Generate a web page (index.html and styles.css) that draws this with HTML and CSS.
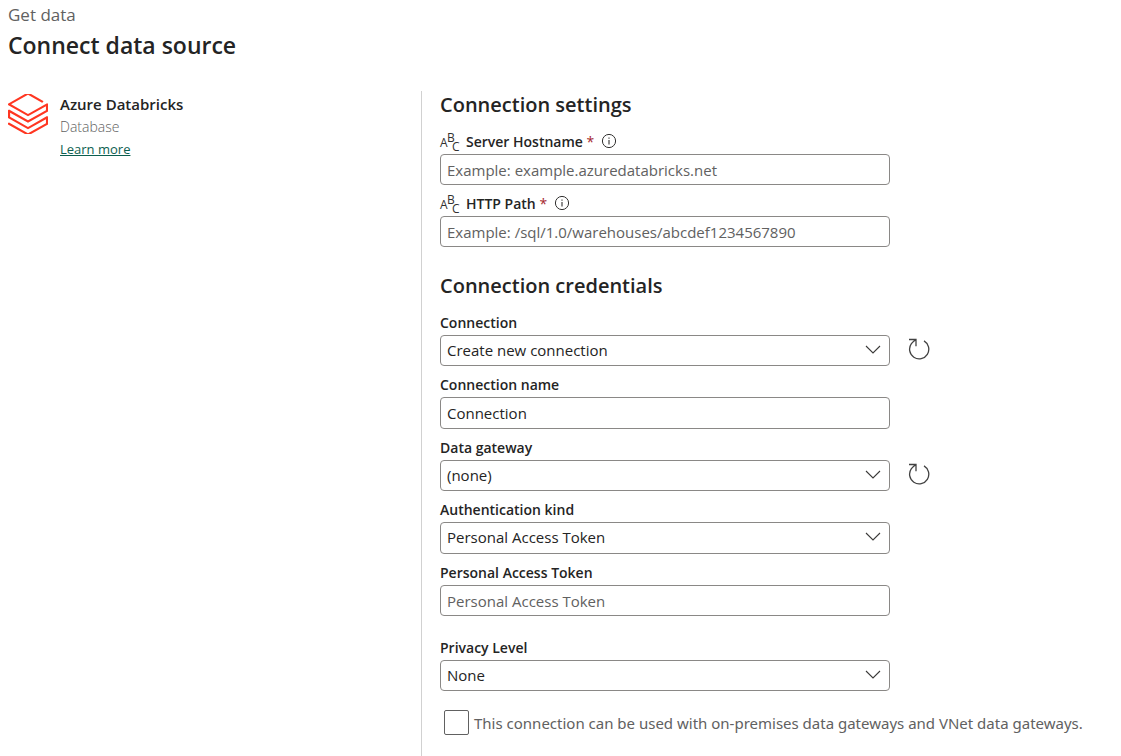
FILE: index.html
```html
<!DOCTYPE html>
<html lang="en">
<head>
<meta charset="utf-8">
<meta name="viewport" content="width=device-width, initial-scale=1">
<title>Connect data source</title>
<link rel="stylesheet" href="styles.css">
</head>
<body>
<svg class="sprite" aria-hidden="true">
  <symbol id="info" viewBox="0 0 16 16">
    <circle cx="8" cy="8" r="6.6" fill="none" stroke="#323130"/>
    <path d="M8 7v4.5M8 4.6v1.2" fill="none" stroke="#323130" stroke-width="1.1"/>
  </symbol>
  <symbol id="refresh" viewBox="0 0 22 22">
    <path d="M16 2.9A9.6 9.6 0 1 1 3.4 5.6Q4.800 3.900 7.600 1.800M1 1.500H8V8.200" fill="none" stroke="#424242" stroke-width="1.3"/>
  </symbol>
  <symbol id="chevron" viewBox="0 0 16 10">
    <path d="M1 1l7 7 7-7" fill="none" stroke="#3b3a39" stroke-width="1.1"/>
  </symbol>
</svg>

<header class="page-header">
  <p class="eyebrow">Get data</p>
  <h1 class="title">Connect data source</h1>
</header>

<main class="layout">
  <aside class="source">
    <svg class="source-logo" viewBox="0.95 0.95 22.1 22.1" role="img" aria-label="Azure Databricks">
      <path fill="#ff3621" d="M.95 14.184L12 20.403l9.919-5.55v2.21L12 22.662l-10.484-5.96-.565.308v.77L12 24l11.05-6.218v-4.317l-.515-.309L12 19.118l-9.867-5.653v-2.21L12 16.805l11.05-6.218V6.32l-.515-.308L12 11.974 2.647 6.681 12 1.388l7.76 4.368.668-.411v-.566L12 0 .95 6.27v.72L12 13.207l9.919-5.55v2.26L12 15.52 1.516 9.56l-.565.308Z"/>
    </svg>
    <div class="source-text">
      <h2 class="source-name">Azure Databricks</h2>
      <p class="source-kind">Database</p>
      <a class="source-link" href="#">Learn more</a>
    </div>
  </aside>

  <form class="form">
    <section class="group">
      <h2 class="group-title">Connection settings</h2>
      <div class="field">
        <div class="label-row">
          <svg class="icon-abc" viewBox="0 0 20 20" aria-hidden="true">
            <text class="glyph" x="0" y="15">A</text>
            <text class="glyph" x="7" y="10">B</text>
            <text class="glyph" x="12" y="19">C</text>
          </svg>
          <label class="label" for="host">Server Hostname <span class="required">*</span></label>
          <button class="icon-button" type="button" aria-label="About Server Hostname"><svg class="icon-info"><use href="#info"/></svg></button>
        </div>
        <input class="control" id="host" type="text" placeholder="Example: example.azuredatabricks.net">
      </div>
      <div class="field">
        <div class="label-row">
          <svg class="icon-abc" viewBox="0 0 20 20" aria-hidden="true">
            <text class="glyph" x="0" y="15">A</text>
            <text class="glyph" x="7" y="10">B</text>
            <text class="glyph" x="12" y="19">C</text>
          </svg>
          <label class="label" for="path">HTTP Path <span class="required">*</span></label>
          <button class="icon-button" type="button" aria-label="About HTTP Path"><svg class="icon-info"><use href="#info"/></svg></button>
        </div>
        <input class="control" id="path" type="text" placeholder="Example: /sql/1.0/warehouses/abcdef1234567890">
      </div>
    </section>

    <section class="group">
      <h2 class="group-title">Connection credentials</h2>
      <div class="field">
        <label class="label" for="connection">Connection</label>
        <div class="control-row">
          <div class="select-wrap">
            <select class="control" id="connection"><option>Create new connection</option></select>
            <svg class="chevron" aria-hidden="true"><use href="#chevron"/></svg>
          </div>
          <button class="icon-button icon-button-refresh" type="button" aria-label="Refresh connections"><svg class="icon-refresh"><use href="#refresh"/></svg></button>
        </div>
      </div>
      <div class="field">
        <label class="label" for="name">Connection name</label>
        <input class="control control-tall" id="name" type="text" value="Connection">
      </div>
      <div class="field">
        <label class="label" for="gateway">Data gateway</label>
        <div class="control-row">
          <div class="select-wrap">
            <select class="control" id="gateway"><option>(none)</option></select>
            <svg class="chevron" aria-hidden="true"><use href="#chevron"/></svg>
          </div>
          <button class="icon-button icon-button-refresh" type="button" aria-label="Refresh gateways"><svg class="icon-refresh"><use href="#refresh"/></svg></button>
        </div>
      </div>
      <div class="field">
        <label class="label" for="auth">Authentication kind</label>
        <div class="select-wrap">
          <select class="control control-tall" id="auth"><option>Personal Access Token</option></select>
          <svg class="chevron" aria-hidden="true"><use href="#chevron"/></svg>
        </div>
      </div>
      <div class="field">
        <label class="label" for="token">Personal Access Token</label>
        <input class="control" id="token" type="text" placeholder="Personal Access Token">
      </div>
      <div class="field field-spaced">
        <label class="label" for="privacy">Privacy Level</label>
        <div class="select-wrap">
          <select class="control" id="privacy"><option>None</option></select>
          <svg class="chevron" aria-hidden="true"><use href="#chevron"/></svg>
        </div>
      </div>
      <label class="check"><input class="check-box" type="checkbox"><span>This connection can be used with on-premises data gateways and VNet data gateways.</span></label>
    </section>
  </form>
</main>
</body>
</html>
```
FILE: styles.css
```css
* {
  box-sizing: border-box;
}

body {
  display: flex;
  flex-direction: column;
  min-height: 100vh;
  margin: 0;
  padding: 4px 8px 0;
  background: #fff;
  color: #242424;
  font-family: "Segoe UI", "Open Sans", "Noto Sans", sans-serif;
  font-size: 15px;
  line-height: 20px;
}

h1, h2, p {
  margin: 0;
}

.sprite {
  position: absolute;
  width: 0;
  height: 0;
}

.glyph {
  fill: #323130;
  font-size: 12px;
}

.eyebrow {
  color: #616161;
  font-size: 17px;
  line-height: 22px;
}

.title {
  font-size: 23px;
  font-weight: 600;
  line-height: 38px;
}

.page-header {
  padding-bottom: 27px;
}

.layout {
  display: flex;
  flex: 1;
}

.source {
  display: flex;
  flex: 0 1 413px;
  align-items: flex-start;
  gap: 12px;
  padding-top: 3px;
}

.source-logo {
  flex: none;
  width: 40px;
  height: 40px;
}

.source-name {
  font-size: 15px;
  font-weight: 600;
  line-height: 21px;
}

.source-kind {
  color: #616161;
  font-size: 14px;
  font-weight: 300;
  line-height: 23px;
}

.source-link {
  color: #0c5e4f;
  font-size: 13px;
  line-height: 22px;
}

.form {
  flex: 1;
  padding-left: 18px;
  border-left: 1px solid #d1d1d1;
}

.group + .group {
  margin-top: 25px;
}

.group-title {
  margin-bottom: 12px;
  font-size: 20px;
  font-weight: 600;
  line-height: 27px;
}

.field {
  display: flex;
  flex-direction: column;
  max-width: 450px;
}

.field + .field {
  margin-top: 7px;
}

.field + .field-spaced {
  margin-top: 20px;
}

.label-row {
  display: flex;
  align-items: center;
}

.label {
  font-size: 14px;
  font-weight: 600;
  line-height: 24px;
}

.required {
  color: #a4262c;
  font-weight: 400;
}

.icon-button {
  display: flex;
  flex: none;
  padding: 0;
  border: 0;
  background: none;
  cursor: pointer;
}

.icon-button-refresh {
  padding-bottom: 3px;
}

.icon-abc {
  flex: none;
  width: 20px;
  height: 20px;
  margin-right: 6px;
  overflow: visible;
}

.icon-info {
  width: 16px;
  height: 16px;
  margin-bottom: 2px;
  margin-left: 7px;
}

.icon-refresh {
  width: 22px;
  height: 22px;
}

.control-row {
  display: flex;
  gap: 18px;
  align-items: center;
  margin-right: -40px;
}

.select-wrap {
  display: grid;
  flex: 1;
  align-items: center;
}

.select-wrap > * {
  grid-area: 1 / 1;
}

.control {
  width: 100%;
  height: 31px;
  padding: 0 6px;
  border: 1px solid #8a8886;
  border-radius: 4px;
  background: #fff;
  color: #242424;
  font: inherit;
  appearance: none;
}

select.control {
  padding-bottom: 2px;
}

.control-tall {
  height: 32px;
}

.control::placeholder {
  color: #616161;
  opacity: 1;
}

.chevron {
  justify-self: end;
  width: 16px;
  height: 10px;
  margin-right: 9px;
  margin-bottom: 2px;
  pointer-events: none;
}

.check {
  display: flex;
  align-items: center;
  gap: 5px;
  margin-top: 19px;
  padding-left: 4px;
  color: #616161;
  font-family: "Segoe UI", "Noto Sans", sans-serif;
}

.check-box {
  flex: none;
  width: 25px;
  height: 25px;
  margin: 0;
  border: 1px solid #616161;
  border-radius: 2px;
  background: #fff;
  appearance: none;
}

.check-box:checked {
  background: #117865;
}
```
